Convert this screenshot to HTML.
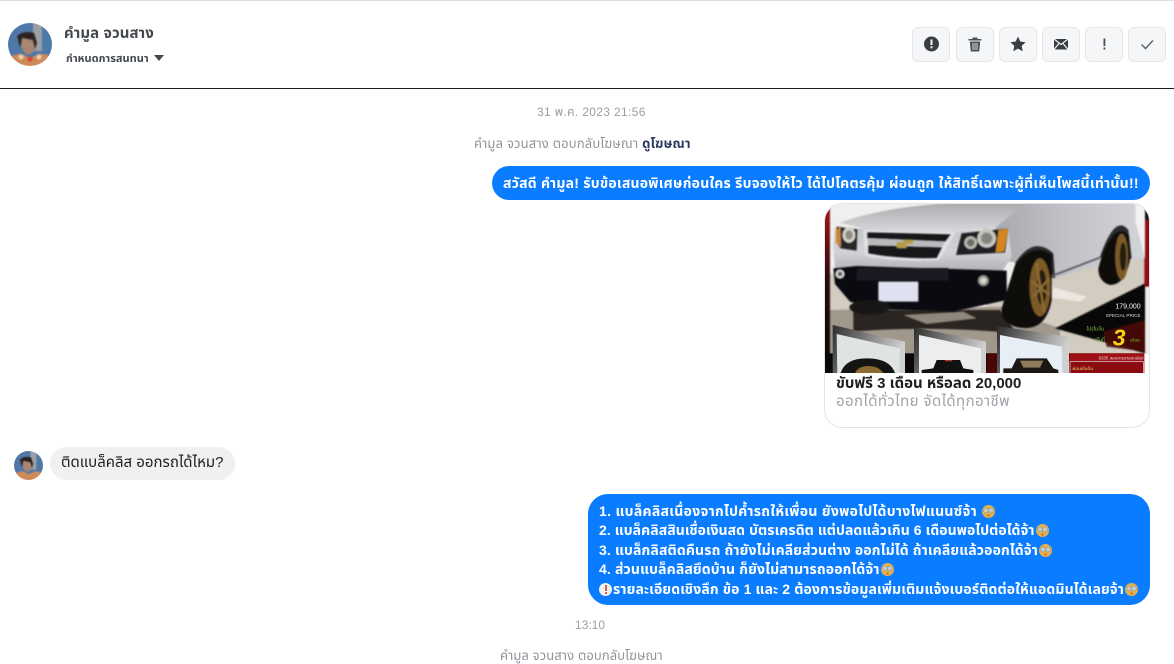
<!DOCTYPE html>
<html lang="th"><head><meta charset="utf-8"><style>
html,body{margin:0;padding:0;background:#fff}
body{width:1174px;height:662px;position:relative;overflow:hidden;font-family:"Liberation Sans","Noto Sans Thai","DejaVu Sans",sans-serif;color:#1c1e21}
.a{position:absolute;white-space:nowrap}
.btn{position:absolute;top:27px;width:38px;height:35px;background:#f5f6f7;border:1px solid #e4e6e9;border-radius:6px;box-sizing:border-box}
.btn svg{position:absolute;left:0;top:0;width:36px;height:33px}
.l{position:absolute;left:599px;font-size:14px;font-weight:700;color:#fff;white-space:nowrap;line-height:20px}
.em{display:inline-block;width:13px;height:13px;border-radius:50%;vertical-align:-2px;margin-left:1px;letter-spacing:0;
background:radial-gradient(circle at 4px 5.5px,#c3cbc6 2px,#85857a 2.6px,transparent 2.9px),radial-gradient(circle at 9px 5.5px,#c3cbc6 2px,#85857a 2.6px,transparent 2.9px),radial-gradient(circle at 6.5px 10.5px,#b07a3a 1px,transparent 1.4px),#e8b04a}
</style></head><body>
<div class="a" style="left:0;top:0;width:1174px;height:1px;background:#ddd"></div>
<div class="a" style="left:0;top:88px;width:1174px;height:1px;background:#1c1c1c"></div>

<svg class="a" style="left:8px;top:23px" width="44" height="43" viewBox="0 0 44 43"><defs><clipPath id="c1"><ellipse cx="22" cy="21.5" rx="22" ry="21.5"/></clipPath><filter id="b1" color-interpolation-filters="sRGB"><feGaussianBlur stdDeviation=".9"/></filter></defs><g clip-path="url(#c1)"><g filter="url(#b1)"><rect x="-2" y="-2" width="48" height="47" fill="#4f78a8"/><rect x="25" y="-2" width="9" height="30" fill="#9aa0a4"/><rect x="34" y="8" width="12" height="24" fill="#4a7aa8"/><path d="M9 13Q16 7 26 10L29 20 27 26 24 17 15 15 12 24Z" fill="#2b2220"/><path d="M14 15L25 17 27 26Q23 33 18 31 14 27 13 22Z" fill="#a88672"/><path d="M-2 45V36Q8 30 14 31L22 35 31 31Q40 30 46 36V45Z" fill="#cf8a5a"/><circle cx="22" cy="36" r="2.500" fill="#d8402c"/><circle cx="13" cy="34" r="2.500" fill="#e8d6ae"/><circle cx="31" cy="34" r="2.500" fill="#e8d6ae"/></g></g></svg>

<div class="a" style="left:64px;top:25px;font-size:15px;font-weight:700;color:#444950;line-height:18px;letter-spacing:.1px">คำมูล จวนสาง</div>
<div class="a" style="left:66px;top:51px;font-size:11px;font-weight:700;color:#444950;line-height:16px">กำหนดการสนทนา</div>
<svg class="a" style="left:154px;top:55px" width="10" height="6"><path d="M0 0H10L5 6Z" fill="#444950"/></svg>

<div class="btn" style="left:912px"><svg viewBox="0 0 36 33"><circle cx="18.500" cy="16" r="7.500" fill="#3a3d42"/><rect x="17.500" y="11.500" width="2" height="5.500" fill="#f5f6f7"/><rect x="17.500" y="18.300" width="2" height="2" fill="#f5f6f7"/></svg></div>
<div class="btn" style="left:956px"><svg viewBox="0 0 36 33"><path d="M11.500 11H24.500V12.500H11.500ZM15.500 9.500H20.500V11H15.500ZM12.800 13.500H23.200L22.200 23.500H13.800Z" fill="#4b4f56"/><path d="M16 15V22M18 15V22M20 15V22" stroke="#f5f6f7" stroke-width=".8"/></svg></div>
<div class="btn" style="left:999px"><svg viewBox="0 0 36 33"><path d="M18 8.500L20.300 13.500 25.500 14.200 21.700 17.900 22.700 23.300 18 20.600 13.300 23.300 14.300 17.900 10.500 14.200 15.700 13.500Z" fill="#3a3d42"/></svg></div>
<div class="btn" style="left:1042px"><svg viewBox="0 0 36 33"><rect x="11" y="11" width="14" height="10.500" fill="#3a3d42"/><path d="M11 11L18 16.500 25 11M11 21.500L16 15.500M25 21.500L20 15.500" stroke="#f5f6f7" stroke-width="1.200" fill="none"/></svg></div>
<div class="btn" style="left:1085px"><svg viewBox="0 0 36 33"><rect x="17.500" y="10.500" width="1.800" height="7.500" fill="#444950"/><rect x="17.500" y="19.500" width="1.800" height="2" fill="#444950"/></svg></div>
<div class="btn" style="left:1128px"><svg viewBox="0 0 36 33"><path d="M12.500 16.500L16.500 20.500 24 12.500" stroke="#606770" stroke-width="1.500" fill="none"/></svg></div>

<div class="a" style="left:537px;top:104px;font-size:12px;color:#9a9ea6;line-height:16px;letter-spacing:.35px">31 พ.ค. 2023 21:56</div>
<div class="a" style="left:474px;top:136px;font-size:13px;color:#90949c;line-height:16px;letter-spacing:.17px">คำมูล จวนสาง ตอบกลับโฆษณา <span style="color:#2a3a5e;font-weight:700">ดูโฆษณา</span></div>

<div class="a" style="left:492px;top:166px;width:658px;height:34px;background:#0a7cff;border-radius:17px"></div>
<div class="a" style="left:503px;top:174px;font-size:14px;font-weight:700;color:#fff;line-height:18px;letter-spacing:.23px">สวัสดี คำมูล! รับข้อเสนอพิเศษก่อนใคร รีบจองให้ไว ได้ไปโคตรคุ้ม ผ่อนถูก ให้สิทธิ์เฉพาะผู้ที่เห็นโพสนี้เท่านั้น!!</div>

<div class="a" style="left:824px;top:203px;width:326px;height:225px;box-sizing:border-box;border:1px solid #e3e4e6;border-radius:18px;overflow:hidden;background:#fff">
<svg style="display:block" width="324" height="169" viewBox="15 12 972 507">
<defs><linearGradient id="body" x1="0" y1="0" x2="0" y2="1"><stop offset="0" stop-color="#c4c5c9"/><stop offset=".5" stop-color="#d2d3d6"/><stop offset="1" stop-color="#aaabaf"/></linearGradient>
<linearGradient id="side" x1="0" y1="0" x2="1" y2="0"><stop offset="0" stop-color="#a8a9ae"/><stop offset=".5" stop-color="#c2c3c8"/><stop offset="1" stop-color="#d3d4d8"/></linearGradient>
<linearGradient id="hood" x1="0" y1="0" x2="0" y2="1"><stop offset="0" stop-color="#a9aaad"/><stop offset="1" stop-color="#d8d9dc"/></linearGradient>
<linearGradient id="redl" x1="0" y1="0" x2="0" y2="1"><stop offset="0" stop-color="#b01218"/><stop offset=".5" stop-color="#2a0a0a"/><stop offset="1" stop-color="#0b0808"/></linearGradient>
<linearGradient id="th" x1="0" y1="0" x2="1" y2="0.3"><stop offset="0" stop-color="#2e2e2e"/><stop offset="1" stop-color="#cfcfcf"/></linearGradient>
<filter id="bl" x="-2%" y="-2%" width="104%" height="104%" color-interpolation-filters="sRGB"><feGaussianBlur stdDeviation="2"/></filter></defs>
<g filter="url(#bl)">
<rect x="0" y="0" width="1000" height="530" fill="#efefed"/>
<path d="M30 220H90L130 330 30 350ZM640 200L975 170V470H500V300Z" fill="#d3ccc1"/>
<path d="M30 330L540 320 720 385 720 470H30Z" fill="#a0988b"/>
<path d="M700 262L800 290 780 305 690 292Z" fill="#ece8e1"/>
<path d="M100 330H540L590 400Q330 375 100 395Z" fill="#2a2520"/>
<path d="M250 345L430 335 470 355 320 372Z" fill="#8f877b"/>
<rect x="0" y="0" width="30" height="470" fill="url(#redl)"/>
<rect x="973" y="60" width="20" height="200" fill="#8f0d13"/>
<rect x="973" y="0" width="20" height="60" fill="#141010"/>
<path d="M60 68Q200 18 420 8H660L525 85 400 96 130 86Z" fill="url(#hood)"/>
<path d="M620 5H950L945 60 975 175 880 185 700 235 600 190 540 180 525 85Z" fill="url(#side)"/>
<path d="M945 5L950 70 975 175V5Z" fill="#f2f2f0"/>
<path d="M585 190Q640 105 700 160L705 235 600 200Z" fill="#2b2b2e"/>
<path d="M840 170Q885 40 925 90L935 175 880 190Z" fill="#2b2b2e"/>
<path d="M690 230L860 165" stroke="#5f6064" stroke-width="6"/>
<path d="M45 85L130 86 400 96 565 85 575 170 540 225 300 215 45 205 40 140Z" fill="url(#body)"/>
<path d="M130 88L408 96 358 180Q240 188 135 168Z" fill="#dfe0e2"/>
<path d="M142 97L392 103 376 124 142 114ZM145 136L366 142 350 174Q240 178 145 160Z" fill="#17171a"/>
<path d="M142 114L376 124 366 142 145 136Z" fill="#b9babc"/>
<path d="M230 126L250 126 250 119 280 119 278 132 260 132 260 145 230 145Z" fill="#b59a4a"/>
<path d="M50 80L112 88 110 152 62 145 48 125Z" fill="#262528"/><ellipse cx="87" cy="105" rx="20" ry="24" fill="#d4d2c8"/><ellipse cx="87" cy="105" rx="11" ry="14" fill="#8e8c84"/><path d="M48 90L62 78 64 142 48 128Z" fill="#c9863a"/>
<path d="M425 100L565 85 555 158 408 165Z" fill="#1f1f24"/><circle cx="500" cy="115" r="29" fill="#c6c6c0"/><circle cx="500" cy="115" r="17" fill="#85857e"/><circle cx="452" cy="128" r="20" fill="#b8b8b0"/><circle cx="452" cy="128" r="11" fill="#6d6d66"/><path d="M535 90L565 85 553 155 526 158Z" fill="#d4851e"/>
</g>
<g filter="url(#bl)">
<path d="M40 205L110 198 560 212 560 300 400 335 170 328 90 305 45 252Z" fill="#0a0a10"/>
<rect x="110" y="204" width="275" height="38" fill="#1a1a22"/>
<circle cx="60" cy="222" r="14" fill="#dcdcdc"/><circle cx="60" cy="222" r="7" fill="#666"/>
<circle cx="490" cy="242" r="17" fill="#8e8e88"/><circle cx="490" cy="242" r="10" fill="#d5d5cf"/>
<rect x="175" y="245" width="120" height="60" rx="2" fill="#dfe0f0"/>
<ellipse cx="150" cy="322" rx="62" ry="22" fill="#191715"/>
<path d="M585 195Q640 125 695 165V300Q680 382 620 384 540 382 545 325Z" fill="#0f0d0a"/>
<ellipse cx="660" cy="262" rx="32" ry="88" fill="#7c5a28"/><ellipse cx="665" cy="262" rx="14" ry="52" fill="#241d10"/>
<path d="M650 190L672 335M635 245L690 285M688 235L640 290" stroke="#8e6a30" stroke-width="8"/>
<path d="M845 170Q885 65 925 105L930 180Q915 255 870 255 835 245 835 205Z" fill="#0f0d0a"/>
<ellipse cx="905" cy="170" rx="20" ry="70" fill="#7c5a28"/><ellipse cx="909" cy="170" rx="9" ry="42" fill="#241d10"/>
<path d="M975 250L705 385 975 460Z" fill="#080808"/>
<path d="M850 395L975 360V455L860 440Z" fill="#4a0a08" opacity=".9"/>
</g>
<text x="962" y="326" font-family="Liberation Sans,sans-serif" font-size="21" fill="#fff" text-anchor="end">179,000</text>
<text x="962" y="351" font-family="Liberation Sans,sans-serif" font-size="14" fill="#ddd" text-anchor="end">SPECIAL PRICE</text>
<text x="800" y="392" font-size="15" fill="#7fc23c">โปรโมชั่น</text>
<text x="825" y="425" font-size="15" fill="#7fc23c">เริ่มที่</text>
<text x="878" y="436" font-family="Liberation Sans,sans-serif" font-size="70" font-weight="700" font-style="italic" fill="#f5d415">3</text>
<text x="930" y="425" font-size="14" fill="#7fc23c">เดือน</text>
<rect x="15" y="460" width="972" height="59" fill="#0d0808"/>
<rect x="500" y="460" width="250" height="59" fill="#4a0607"/>
<rect x="748" y="460" width="225" height="59" fill="#9e1015"/>
<rect x="973" y="460" width="14" height="59" fill="#fff"/>
<text x="970" y="478" font-size="13" font-style="italic" fill="#f1e5e5" text-anchor="end">0335 สอบถามรายละเอียด</text>
<rect x="750" y="484" width="220" height="40" rx="4" fill="#8a0b10" stroke="#eee" stroke-width="2"/>
<text x="757" y="510" font-size="14" fill="#f0d36a">ผ่อนเริ่มต้น</text>
<path d="M38 375L255 425 255 519H38Z" fill="url(#th)"/>
<path d="M50 402L240 445 238 519H52Z" fill="#dfe3e2"/>
<path d="M62 519Q75 475 140 475 210 475 225 519Z" fill="#141414"/><path d="M105 519Q115 498 145 498 175 498 190 519Z" fill="#8d6a30"/>
<path d="M282 382L498 425 498 519H282Z" fill="url(#th)"/>
<path d="M297 405L483 445 483 519H297Z" fill="#eceeee"/>
<path d="M305 519V510L340 505 350 480H420L430 505 460 510V519Z" fill="#111"/><rect x="375" y="480" width="22" height="4" fill="#a33"/>
<path d="M531 378L747 410 747 519H531Z" fill="url(#th)"/>
<path d="M540 405L725 440 727 519H540Z" fill="#e8eef5"/>
<path d="M550 519V505L575 505 590 475H680L700 505 715 510V519Z" fill="#1a1715"/><path d="M600 482H670L660 503H610Z" fill="#8f7a5a"/>
</svg>
</div>
<div class="a" style="left:836px;top:375px;font-size:15px;font-weight:700;color:#1c1e21;line-height:18px">ขับฟรี 3 เดือน หรือลด 20,000</div>
<div class="a" style="left:836px;top:393px;font-size:15px;color:#a0a3a9;line-height:18px;letter-spacing:.4px">ออกได้ทั่วไทย จัดได้ทุกอาชีพ</div>

<svg class="a" style="left:14px;top:451px" width="29" height="29" viewBox="0 0 44 44"><defs><clipPath id="c2"><circle cx="22" cy="22" r="22"/></clipPath></defs><g clip-path="url(#c2)"><g filter="url(#b1)"><rect x="-2" y="-2" width="48" height="48" fill="#4f78a8"/><rect x="25" y="-2" width="9" height="30" fill="#9aa0a4"/><path d="M9 13Q16 7 26 10L29 20 27 26 24 17 15 15 12 24Z" fill="#2b2220"/><path d="M14 15L25 17 27 26Q23 33 18 31 14 27 13 22Z" fill="#a88672"/><path d="M-2 46V36Q8 30 14 31L22 35 31 31Q40 30 46 36V46Z" fill="#cf8a5a"/></g></g></svg>
<div class="a" style="left:50px;top:447px;width:185px;height:33px;background:#f1f0f0;border-radius:17px"></div>
<div class="a" style="left:61px;top:454px;font-size:15px;color:#1c1e21;line-height:18px">ติดแบล็คลิส ออกรถได้ไหม?</div>

<div class="a" style="left:588px;top:494px;width:562px;height:111px;background:#0a7cff;border-radius:20px"></div>
<div class="l" style="top:501px;letter-spacing:.3px">1. แบล็คลิสเนื่องจากไปค้ำรถให้เพื่อน ยังพอไปได้บางไฟแนนซ์จ้า <span class="em"></span></div>
<div class="l" style="top:520px;letter-spacing:.07px">2. แบล็คลิสสินเชื่อเงินสด บัตรเครดิต แต่ปลดแล้วเกิน 6 เดือนพอไปต่อได้จ้า<span class="em"></span></div>
<div class="l" style="top:540px;letter-spacing:.14px">3. แบล็กลิสติดคืนรถ ถ้ายังไม่เคลียส่วนต่าง ออกไม่ได้ ถ้าเคลียแล้วออกได้จ้า<span class="em"></span></div>
<div class="l" style="top:559px;letter-spacing:.14px">4. ส่วนแบล็คลิสยึดบ้าน ก็ยังไม่สามารถออกได้จ้า<span class="em"></span></div>
<div class="l" style="top:579px;letter-spacing:.13px"><span style="display:inline-block;width:13px;height:13px;border-radius:50%;background:#f0f0f0;vertical-align:-2px;position:relative;margin-right:1px"><span style="position:absolute;left:5.500px;top:2px;width:2px;height:6px;background:#c9605a"></span><span style="position:absolute;left:5.500px;top:9px;width:2px;height:2px;background:#c9605a"></span></span>รายละเอียดเชิงลึก ข้อ 1 และ 2 ต้องการข้อมูลเพิ่มเติมแจ้งเบอร์ติดต่อให้แอดมินได้เลยจ้า<span class="em"></span></div>

<div class="a" style="left:575px;top:617px;font-size:12px;color:#9a9ea6;line-height:16px">13:10</div>
<div class="a" style="left:500px;top:648px;font-size:13px;color:#90949c;line-height:16px;letter-spacing:.1px">คำมูล จวนสาง ตอบกลับโฆษณา</div>
</body></html>
